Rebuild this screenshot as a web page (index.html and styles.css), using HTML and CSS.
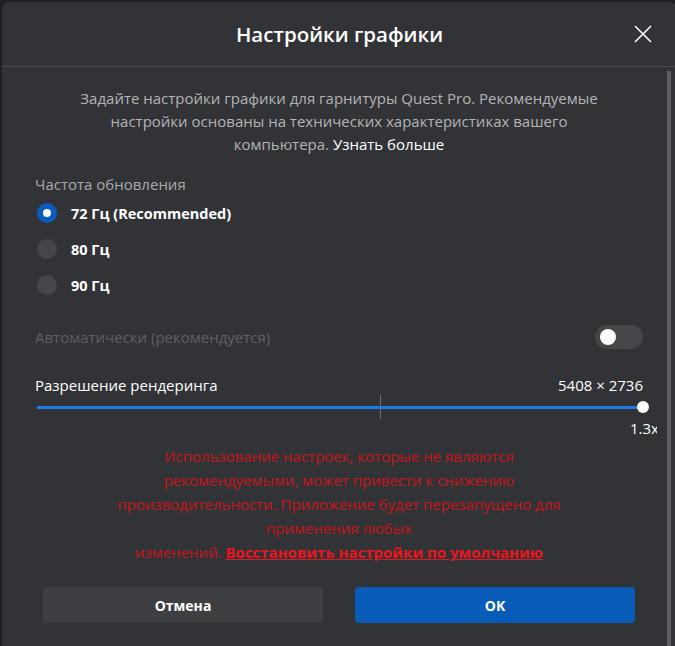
FILE: index.html
```html
<!DOCTYPE html>
<html lang="ru">
    <head>
        <meta charset="UTF-8" />
        <meta name="viewport" content="width=device-width, initial-scale=1.0" />
        <title>Настройки графики</title>
        <link rel="stylesheet" href="styles.css">
    </head>
    <body>
        <!-- 설정 대화상자 -->
        <section class="dialog">
            <!-- 헤더 -->
            <header class="dlg-head">
                <span></span>
                <h1 class="dlg-title">Настройки графики</h1>
                <button class="close" aria-label="Закрыть">
                    <svg width="18" height="18" viewBox="0 0 18 18">
                        <path d="M1 1 L17 17 M17 1 L1 17" stroke="#fff" stroke-width="1.6" fill="none" />
                    </svg>
                </button>
            </header>

            <!-- 본문 + 스크롤바 -->
            <div class="dlg-body">
                <div class="content">
                    <p class="desc">
                        Задайте настройки графики для гарнитуры Quest Pro. Рекомендуемые<br />
                        настройки основаны на технических характеристиках вашего<br />
                        компьютера. <a href="#" class="more">Узнать больше</a>
                    </p>

                    <div class="sub">Частота обновления</div>
                    <ul class="radios">
                        <li class="radio on"><span class="dot"></span>72 Гц (Recommended)</li>
                        <li class="radio"><span class="dot"></span>80 Гц</li>
                        <li class="radio"><span class="dot"></span>90 Гц</li>
                    </ul>

                    <div class="row auto">
                        <span>Автоматически (рекомендуется)</span>
                        <span class="toggle"><i></i></span>
                    </div>

                    <div class="row render">
                        <span>Разрешение рендеринга</span>
                        <span>5408 × 2736</span>
                    </div>

                    <!-- 슬라이더 -->
                    <div class="slider">
                        <div class="track"></div>
                        <span class="tick"></span>
                        <span class="thumb"></span>
                    </div>
                    <div class="scale"><span>1.3x</span></div>

                    <p class="warn">
                        Использование настроек, которые не являются<br />
                        рекомендуемыми, может привести к снижению<br />
                        производительности. Приложение будет перезапущено для<br />
                        применения любых<br />
                        изменений. <a href="#">Восстановить настройки по умолчанию</a>
                    </p>

                    <div class="btns">
                        <button class="btn cancel">Отмена</button>
                        <button class="btn ok">OK</button>
                    </div>
                </div>
                <div class="scrollbar"></div>
            </div>
        </section>
    </body>
</html>
```

FILE: styles.css
```css
/* 공통 */
:root {
    --bg: #323336;
    --line: #47484b;
    --blue: #1b7be8;
}

html,
body {
    margin: 0;
    height: 100%;
    overflow: hidden;
}

body {
    background-color: #1f2023;
    font-family: "Open Sans", "Noto Sans", sans-serif;
    color: #fff;
}

/* 대화상자 */
.dialog {
    margin: 2px 0 0 2px;
    width: 675px;
    height: 644px;
    border-radius: 8px 8px 0 0;
    background-color: var(--bg);
    display: flex;
    flex-direction: column;
}

.dlg-head {
    height: 64px;
    border-bottom: 1px solid var(--line);
    display: grid;
    grid-template-columns: 1fr auto 1fr;
    align-items: center;
}

.dlg-title {
    margin: 0;
    font-size: 20.5px;
    font-weight: 600;
}

.close {
    justify-self: end;
    margin-right: 25px;
    padding: 0;
    width: 18px;
    height: 18px;
    border: 0;
    background: none;
    display: flex;
}

/* 본문 */
.dlg-body {
    flex: 1;
    display: flex;
    min-height: 0;
}

.content {
    width: 608px;
    padding: 0 24px 0 33px;
    overflow: hidden;
}

.scrollbar {
    margin-top: 4px;
    width: 4px;
    background-color: #5c5d60;
}

.desc {
    margin: 20px 0 0;
    font-size: 15px;
    line-height: 23px;
    text-align: center;
    color: #b3b4b7;
}

.desc .more {
    color: #fff;
    text-decoration: none;
}

.sub {
    margin-top: 18px;
    font-size: 15px;
    line-height: 20px;
    color: #a9aaad;
}

/* 라디오 */
.radios {
    margin: 1px 0 0;
    padding: 0;
    list-style: none;
}

.radio {
    height: 36px;
    display: flex;
    align-items: center;
    gap: 14px;
    padding-left: 2px;
    font-size: 14.5px;
    font-weight: 700;
}

.dot {
    width: 20px;
    height: 20px;
    border-radius: 50%;
    background-color: #45464a;
    display: flex;
    align-items: center;
    justify-content: center;
}

.radio.on .dot {
    background-color: #0b5cbf;
}

.radio.on .dot::after {
    content: "";
    width: 8px;
    height: 8px;
    border-radius: 50%;
    background-color: #fff;
}

/* 행 */
.row {
    display: flex;
    justify-content: space-between;
    align-items: center;
    font-size: 15px;
}

.auto {
    margin-top: 22px;
    height: 24px;
    color: #5f6063;
}

.toggle {
    width: 48px;
    height: 24px;
    border-radius: 12px;
    background-color: #45464a;
    display: flex;
    align-items: center;
    padding-left: 5px;
    box-sizing: border-box;
}

.toggle i {
    width: 16px;
    height: 16px;
    border-radius: 50%;
    background-color: #fff;
}

.render {
    margin-top: 26px;
    line-height: 20px;
}

/* 슬라이더 */
.slider {
    position: relative;
    margin-left: 2px;
    height: 24px;
    display: flex;
    align-items: center;
}

.track {
    flex: 1;
    height: 3px;
    background-color: var(--blue);
}

.tick {
    position: absolute;
    left: 343px;
    top: 0;
    width: 1px;
    height: 24px;
    background-color: #6f7073;
}

.thumb {
    position: absolute;
    right: -6px;
    top: 6px;
    width: 12px;
    height: 12px;
    border-radius: 50%;
    background-color: #fff;
}

.scale {
    display: flex;
    justify-content: flex-end;
    margin-right: -14px;
    font-size: 15px;
    line-height: 18px;
}

.scale span {
    width: 27px;
    overflow: hidden;
    white-space: nowrap;
}

/* 경고문 */
.warn {
    margin: 7px 0 0;
    font-size: 15px;
    line-height: 24px;
    text-align: center;
    color: #c4161c;
}

.warn a {
    color: #e8161f;
    font-weight: 700;
}

/* 버튼 */
.btns {
    margin: 23px 8px 0;
    display: flex;
    gap: 32px;
}

.btn {
    flex: 1;
    height: 36px;
    border: 0;
    border-radius: 4px;
    font-family: inherit;
    font-size: 14px;
    font-weight: 700;
    color: #fff;
}

.cancel {
    background-color: #3e3f42;
}

.ok {
    background-color: #085bb6;
}
```
